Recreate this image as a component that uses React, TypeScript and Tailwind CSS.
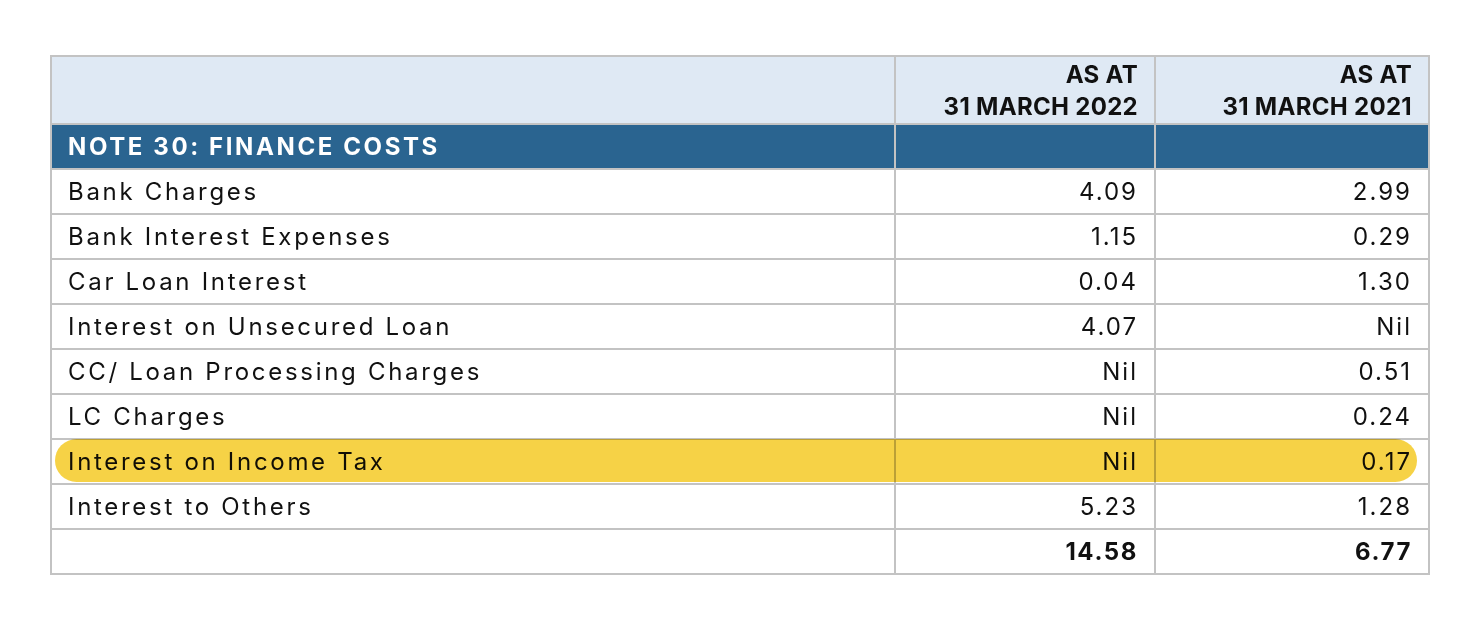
const rows: [string, string, string][] = [
  ["Bank Charges", "4.09", "2.99"],
  ["Bank Interest Expenses", "1.15", "0.29"],
  ["Car Loan Interest", "0.04", "1.30"],
  ["Interest on Unsecured Loan", "4.07", "Nil"],
  ["CC/ Loan Processing Charges", "Nil", "0.51"],
  ["LC Charges", "Nil", "0.24"],
  ["Interest on Income Tax", "Nil", "0.17"],
  ["Interest to Others", "5.23", "1.28"],
]

const cell = "border-2 border-[#c3c3c3] h-[45px] px-[16px] py-0"

export default function App() {
  return (
    <div className="min-h-screen bg-white pt-[55px] pl-[50px] font-['Inter','Liberation_Sans',sans-serif] text-[#111]">
      <div className="relative w-[1378px]">
        <table className="w-[1378px] table-fixed border-collapse">
          <colgroup>
            <col className="w-[844px]" />
            <col className="w-[260px]" />
            <col className="w-[274px]" />
          </colgroup>
          <thead>
            <tr className="bg-[#dfe9f4]">
              <th className={`${cell} h-[60px]`} />
              {["2022", "2021"].map((y) => (
                <th
                  key={y}
                  className={`${cell} h-[60px] pt-[2px] text-right align-top text-[24px] font-bold leading-[32px] tracking-[0.3px]`}
                >
                  AS AT
                  <br />
                  31 MARCH {y}
                </th>
              ))}
            </tr>
          </thead>
          <tbody>
            <tr className="bg-[#2a6490] text-white">
              <td className={`${cell} text-left text-[24px] font-bold tracking-[2.6px]`}>NOTE 30: FINANCE COSTS</td>
              <td className={cell} />
              <td className={cell} />
            </tr>
            {rows.map(([label, a, b]) => (
              <tr key={label} className="text-[24px]">
                <td className={`${cell} text-left tracking-[2.7px]`}>{label}</td>
                <td className={`${cell} text-right tracking-[2px]`}>{a}</td>
                <td className={`${cell} text-right tracking-[2px]`}>{b}</td>
              </tr>
            ))}
            <tr className="text-[24px] font-bold tracking-[1.6px]">
              <td className={cell} />
              <td className={`${cell} text-right`}>14.58</td>
              <td className={`${cell} text-right`}>6.77</td>
            </tr>
          </tbody>
        </table>
        <div className="pointer-events-none absolute left-[5px] top-[384px] h-[43px] w-[1362px] rounded-full bg-[#f6d246] mix-blend-multiply" />
      </div>
    </div>
  )
}
